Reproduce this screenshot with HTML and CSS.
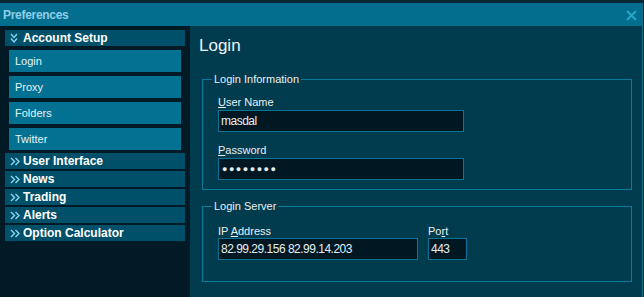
FILE: index.html
```html
<!DOCTYPE html>
<html lang="en">
<head>
  <meta charset="UTF-8">
  <title>Preferences</title>
  <link rel="stylesheet" href="styles.css">
</head>
<body>
  <div class="window">
    <div class="titlebar">
      <span class="title">Preferences</span>
      <svg class="close" width="11" height="11" viewBox="0 0 11 11">
        <path d="M1 1 L10 10 M10 1 L1 10" stroke="#2aa3c6" stroke-width="2"/>
      </svg>
    </div>
    <div class="body">
      <nav class="sidebar">
        <div class="group open">
          <svg class="chev" width="8" height="11" viewBox="0 0 8 11">
            <path d="M1 1 L4 4.5 L7 1 M1 5.5 L4 9 L7 5.5" stroke="#8ad6f2" stroke-width="1.4" fill="none"/>
          </svg>
          Account Setup
        </div>
        <div class="item">Login</div>
        <div class="item">Proxy</div>
        <div class="item">Folders</div>
        <div class="item">Twitter</div>
        <div class="group first">
          <svg class="chev" width="10" height="9" viewBox="0 0 10 9">
            <path d="M1 1 L4.5 4.5 L1 8 M5.5 1 L9 4.5 L5.5 8" stroke="#8ad6f2" stroke-width="1.4" fill="none"/>
          </svg>
          User Interface
        </div>
        <div class="group">
          <svg class="chev" width="10" height="9" viewBox="0 0 10 9">
            <path d="M1 1 L4.5 4.5 L1 8 M5.5 1 L9 4.5 L5.5 8" stroke="#8ad6f2" stroke-width="1.4" fill="none"/>
          </svg>
          News
        </div>
        <div class="group">
          <svg class="chev" width="10" height="9" viewBox="0 0 10 9">
            <path d="M1 1 L4.5 4.5 L1 8 M5.5 1 L9 4.5 L5.5 8" stroke="#8ad6f2" stroke-width="1.4" fill="none"/>
          </svg>
          Trading
        </div>
        <div class="group">
          <svg class="chev" width="10" height="9" viewBox="0 0 10 9">
            <path d="M1 1 L4.5 4.5 L1 8 M5.5 1 L9 4.5 L5.5 8" stroke="#8ad6f2" stroke-width="1.4" fill="none"/>
          </svg>
          Alerts
        </div>
        <div class="group">
          <svg class="chev" width="10" height="9" viewBox="0 0 10 9">
            <path d="M1 1 L4.5 4.5 L1 8 M5.5 1 L9 4.5 L5.5 8" stroke="#8ad6f2" stroke-width="1.4" fill="none"/>
          </svg>
          Option Calculator
        </div>
      </nav>
      <main class="content">
        <h1>Login</h1>
        <fieldset class="box">
          <legend>Login Information</legend>
          <label class="lbl"><u>U</u>ser Name</label>
          <div class="field wide">masdal</div>
          <label class="lbl gap"><u>P</u>assword</label>
          <div class="field wide dots">&#9679;&#9679;&#9679;&#9679;&#9679;&#9679;&#9679;&#9679;</div>
        </fieldset>
        <fieldset class="box server">
          <legend>Login Server</legend>
          <div class="row">
            <div class="col">
              <label class="lbl">IP <u>A</u>ddress</label>
              <div class="field ip">82.99.29.156 82.99.14.203</div>
            </div>
            <div class="col">
              <label class="lbl">Po<u>r</u>t</label>
              <div class="field port">443</div>
            </div>
          </div>
        </fieldset>
      </main>
    </div>
  </div>
</body>
</html>
```

FILE: styles.css
```css
* { margin: 0; padding: 0; box-sizing: border-box; }
body {
  font-family: 'Liberation Sans', Arial, sans-serif;
  background: #0b2633;
  width: 644px;
  height: 297px;
  overflow: hidden;
  padding-top: 3px;
}
.window {
  width: 643px;
  height: 294px;
  border-right: 1px solid #0a7090;
  display: flex;
  flex-direction: column;
}
.titlebar {
  height: 23px;
  background: #046e8e;
  display: flex;
  align-items: center;
  justify-content: space-between;
  padding: 0 5px 0 3px;
}
.title {
  color: #8ccfe9;
  font-weight: bold;
  font-size: 12px;
  letter-spacing: -0.3px;
}
.close { margin-top: 1px; }
.body {
  flex: 1;
  display: flex;
}

/* Sidebar */
.sidebar {
  width: 190px;
  background: #021a26;
  padding: 4px 0 0 5px;
  display: flex;
  flex-direction: column;
}
.group {
  width: 180px;
  height: 16px;
  background: #01506a;
  color: #fff;
  font-weight: bold;
  font-size: 12px;
  display: flex;
  align-items: center;
  padding-left: 5px;
  margin-bottom: 2px;
}
.group .chev { margin-right: 3px; }
.group.open .chev { margin-right: 5px; }
.group.open { margin-bottom: 4px; }
.group.first { margin-top: -1px; }
.item {
  width: 172px;
  height: 22px;
  margin: 0 0 4px 4px;
  background: #027192;
  color: #e6f3f7;
  font-size: 11px;
  display: flex;
  align-items: center;
  padding-left: 6px;
}

/* Content */
.content {
  flex: 1;
  background: #013b4e;
  padding: 10px 10px 0 12px;
  color: #e8f0f2;
}
h1 {
  font-weight: normal;
  font-size: 17px;
  line-height: 20px;
  margin: 0 0 17px -3px;
  color: #eef4f6;
}
.box {
  border: 1px solid #0a7b9b;
  padding: 10px 15px 9px 15px;
}
.box legend {
  font-size: 11px;
  line-height: 13px;
  padding: 0 2px;
  margin-left: -6px;
}
.server {
  margin-top: 10px;
  padding-top: 12px;
  padding-bottom: 21px;
}
.lbl {
  display: block;
  font-size: 11px;
  line-height: 13px;
  margin-bottom: 1px;
}
.lbl.gap { margin-top: 12px; }
.lbl u { text-decoration-thickness: 1px; }
.field {
  height: 22px;
  background: #011823;
  border: 1px solid #0a7596;
  color: #e8eef0;
  font-size: 12px;
  letter-spacing: -0.5px;
  display: flex;
  align-items: center;
  padding-left: 2px;
}
.wide { width: 246px; }
.dots { font-size: 9px; letter-spacing: 1.5px; padding-left: 3px; }
.row { display: flex; gap: 10px; }
.col .lbl { margin-bottom: 0; }
.ip { width: 200px; }
.port { width: 39px; }
```
